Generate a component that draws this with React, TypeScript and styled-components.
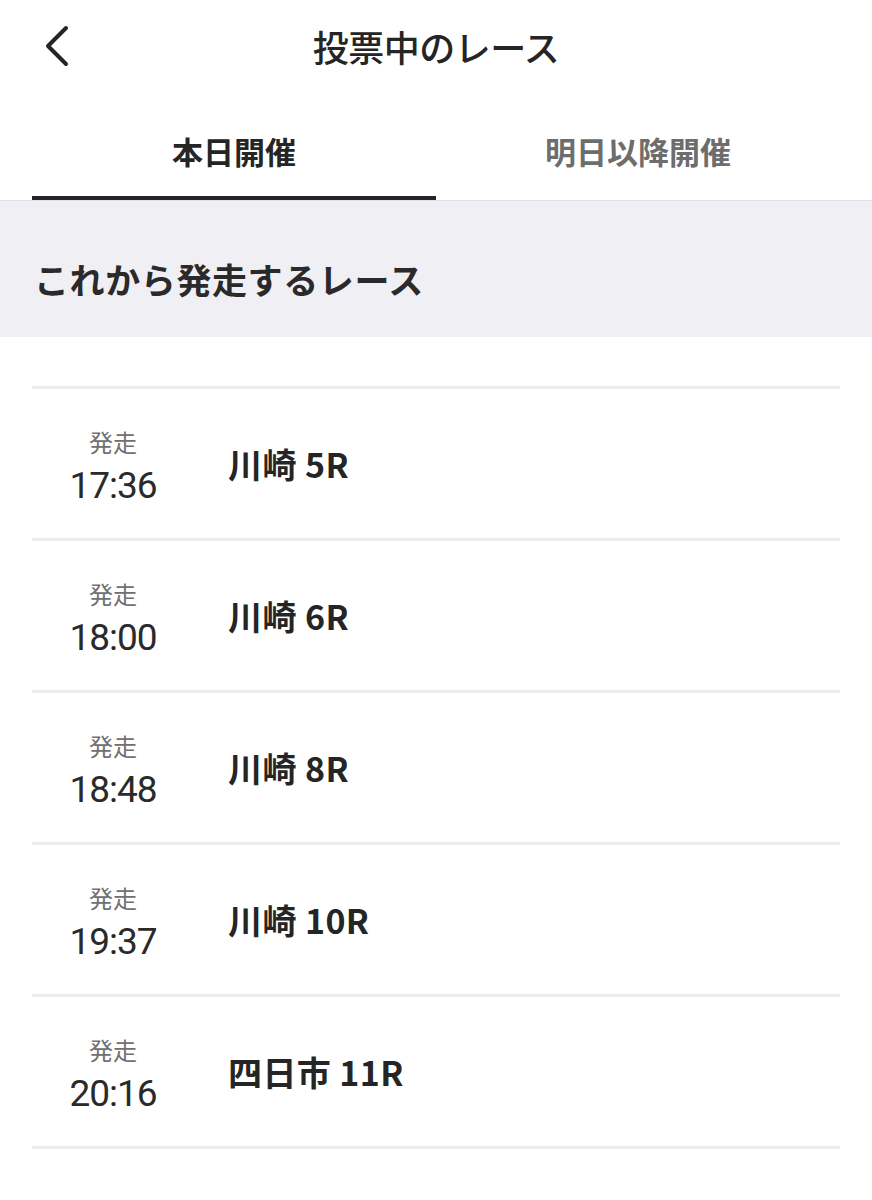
import styled, { createGlobalStyle } from "styled-components";

const GlobalStyle = createGlobalStyle`
  body {
    margin: 0;
    background: #ffffff;
    font-family: "Noto Sans CJK JP", "Noto Sans", sans-serif;
    color: #252525;
  }
`;

const Page = styled.div`
  width: 872px;
  min-height: 1200px;
  background: #ffffff;
`;

const Header = styled.header`
  display: grid;
  grid-template-columns: 1fr auto 1fr;
  align-items: center;
  height: 92px;
`;

const BackButton = styled.button`
  justify-self: start;
  display: flex;
  align-items: center;
  justify-content: center;
  width: 44px;
  height: 48px;
  margin-left: 35px;
  padding: 0;
  border: none;
  background: none;
  cursor: pointer;
`;

const Title = styled.h1`
  margin: 0;
  font-size: 36px;
  font-weight: 500;
  color: #252525;
  letter-spacing: -0.5px;
`;

const TabBar = styled.nav`
  display: flex;
  padding: 0 32px;
  border-bottom: 1px solid #e1e1e6;
`;

const Tab = styled.button<{ $active?: boolean }>`
  flex: 1;
  height: 108px;
  box-sizing: border-box;
  padding: 12px 0 0;
  border: none;
  border-bottom: 4px solid ${(p) => (p.$active ? "#252528" : "transparent")};
  background: none;
  font-family: inherit;
  font-size: 31px;
  font-weight: 700;
  color: ${(p) => (p.$active ? "#252525" : "#6d6d6d")};
  cursor: pointer;
`;

const SectionHead = styled.div`
  display: flex;
  align-items: center;
  height: 136px;
  box-sizing: border-box;
  padding: 18px 34px 0;
  background: #efeff4;
  font-size: 35px;
  font-weight: 700;
  letter-spacing: 0.6px;
  color: #2a2a2a;
`;

const RaceList = styled.ul`
  margin: 0 32px;
  padding: 49px 0 0;
`;

const Row = styled.li`
  list-style-type: none;
  display: flex;
  align-items: center;
  height: 149px;
  border-top: 3px solid #ececf0;

  &:last-child {
    border-bottom: 3px solid #ececf0;
  }
`;

const TimeCol = styled.div`
  display: flex;
  flex-direction: column;
  align-items: center;
  width: 162px;
`;

const StartLabel = styled.span`
  margin-top: 4px;
  font-size: 24px;
  line-height: 36px;
  color: #707070;
`;

const StartTime = styled.span`
  margin-top: 4px;
  font-family: Roboto, "Liberation Sans", sans-serif;
  font-size: 37px;
  line-height: 44px;
  color: #2a2a2a;
  letter-spacing: -1px;
`;

const RaceName = styled.span`
  margin-left: 34px;
  font-size: 34px;
  font-weight: 700;
  letter-spacing: 0.4px;
  color: #252525;
`;

const races = [
  { time: "17:36", name: "川崎 5R" },
  { time: "18:00", name: "川崎 6R" },
  { time: "18:48", name: "川崎 8R" },
  { time: "19:37", name: "川崎 10R" },
  { time: "20:16", name: "四日市 11R" },
];

const App = () => {
  return (
    <Page>
      <GlobalStyle />
      <Header>
        <BackButton aria-label="戻る">
          <svg width="30" height="44" viewBox="0 0 30 44">
            <polyline
              points="24,4 6,22 24,40"
              fill="none"
              stroke="#252525"
              strokeWidth="4"
              strokeLinecap="round"
              strokeLinejoin="round"
            />
          </svg>
        </BackButton>
        <Title>投票中のレース</Title>
        <div />
      </Header>
      <TabBar>
        <Tab $active>本日開催</Tab>
        <Tab>明日以降開催</Tab>
      </TabBar>
      <SectionHead>これから発走するレース</SectionHead>
      <RaceList>
        {races.map((r) => (
          <Row key={r.name}>
            <TimeCol>
              <StartLabel>発走</StartLabel>
              <StartTime>{r.time}</StartTime>
            </TimeCol>
            <RaceName>{r.name}</RaceName>
          </Row>
        ))}
      </RaceList>
    </Page>
  );
};

export default App;
